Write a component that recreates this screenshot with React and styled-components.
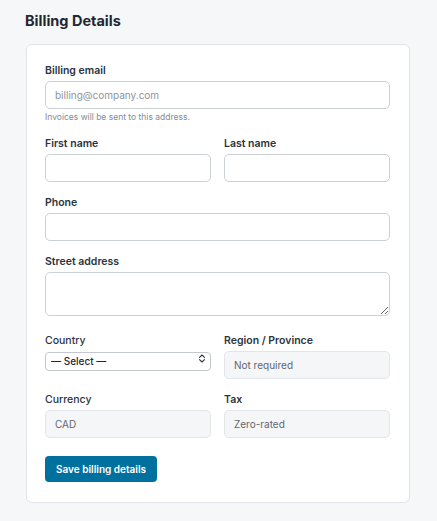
import React from 'react'
import styled, { createGlobalStyle } from 'styled-components'

const GlobalStyle = createGlobalStyle`
  body {
    margin: 0;
    background: #f6f7f9;
    font-family: 'Inter', 'Liberation Sans', sans-serif;
    color: #1f2733;
  }
`

const Page = styled.div`
  padding: 11px 27px 19px 26px;
`

const Title = styled.h2`
  margin: 0 0 14px -1px;
  font-size: 14.5px;
  line-height: 19px;
  font-weight: 700;
  color: #1f2733;
`

const Card = styled.form`
  background: #ffffff;
  border: 1px solid #e1e4e8;
  border-radius: 6px;
  padding: 19px 19px 20px 18px;
  display: flex;
  flex-direction: column;
  gap: 14px;
`

const Row = styled.div`
  display: grid;
  grid-template-columns: 1fr 1fr;
  gap: 13px;
`

const Field = styled.div`
  display: flex;
  flex-direction: column;
  gap: 4px;
`

const Label = styled.label`
  font-size: 10.5px;
  line-height: 13px;
  font-weight: ${(p) => (p.$light ? 500 : 600)};
  color: #2b3340;
`

const Input = styled.input`
  box-sizing: border-box;
  height: 28px;
  width: 100%;
  padding: 0 9px;
  font: inherit;
  font-size: 10px;
  color: #1f2733;
  background: ${(p) => (p.disabled ? '#f5f6f8' : '#ffffff')};
  border: 1px solid ${(p) => (p.disabled ? '#e2e5e9' : '#cbd0d7')};
  border-radius: 5px;
  outline: none;

  &::placeholder {
    color: #8e949c;
  }
  &:disabled {
    color: #5f6670;
  }
`

const TextArea = styled.textarea`
  box-sizing: border-box;
  display: block;
  height: 44px;
  width: 100%;
  margin-bottom: 4px;
  padding: 6px 9px;
  font: inherit;
  font-size: 10px;
  border: 1px solid #cbd0d7;
  border-radius: 5px;
  resize: vertical;
`

const Help = styled.div`
  margin-top: -2px;
  font-size: 8.5px;
  line-height: 12px;
  color: #858b94;
`

const SelectWrap = styled.div`
  position: relative;
  height: 19px;
  margin-top: -2px;

  svg {
    position: absolute;
    right: 5px;
    top: 5px;
    pointer-events: none;
  }
`

const Select = styled.select`
  appearance: none;
  box-sizing: border-box;
  width: 100%;
  height: 19px;
  padding: 0 18px 0 5px;
  font: inherit;
  font-size: 10px;
  font-weight: 500;
  color: #1f2733;
  background: #ffffff;
  border: 1px solid #c3c8cf;
  border-radius: 4px;
  outline: none;
`

const Button = styled.button`
  align-self: flex-start;
  margin-top: 4px;
  height: 26px;
  padding: 0 11px;
  font: inherit;
  font-size: 10px;
  font-weight: 600;
  color: #ffffff;
  background: #00719f;
  border: none;
  border-radius: 4px;
  cursor: pointer;
`

const Chevrons = () => (
  <svg width="8" height="9" viewBox="0 0 8 9" fill="none" stroke="#2b3340" strokeWidth="1.1" strokeLinecap="round" strokeLinejoin="round">
    <path d="M1.5 3.3 L4 1 L6.5 3.3" />
    <path d="M1.5 5.7 L4 8 L6.5 5.7" />
  </svg>
)

export default function App() {
  return (
    <Page>
      <GlobalStyle />
      <Title>Billing Details</Title>
      <Card onSubmit={(e) => e.preventDefault()}>
        <Field>
          <Label>Billing email</Label>
          <Input type="email" placeholder="billing@company.com" />
          <Help>Invoices will be sent to this address.</Help>
        </Field>
        <Row>
          <Field>
            <Label>First name</Label>
            <Input />
          </Field>
          <Field>
            <Label>Last name</Label>
            <Input />
          </Field>
        </Row>
        <Field>
          <Label>Phone</Label>
          <Input type="tel" />
        </Field>
        <Field>
          <Label>Street address</Label>
          <TextArea rows={2} />
        </Field>
        <Row>
          <Field>
            <Label $light>Country</Label>
            <SelectWrap>
              <Select defaultValue="">
                <option value="">— Select —</option>
                <option value="CA">Canada</option>
              </Select>
              <Chevrons />
            </SelectWrap>
          </Field>
          <Field>
            <Label>Region / Province</Label>
            <Input disabled value="Not required" readOnly />
          </Field>
        </Row>
        <Row>
          <Field>
            <Label $light>Currency</Label>
            <Input disabled value="CAD" readOnly />
          </Field>
          <Field>
            <Label>Tax</Label>
            <Input disabled value="Zero-rated" readOnly />
          </Field>
        </Row>
        <Button type="submit">Save billing details</Button>
      </Card>
    </Page>
  )
}
